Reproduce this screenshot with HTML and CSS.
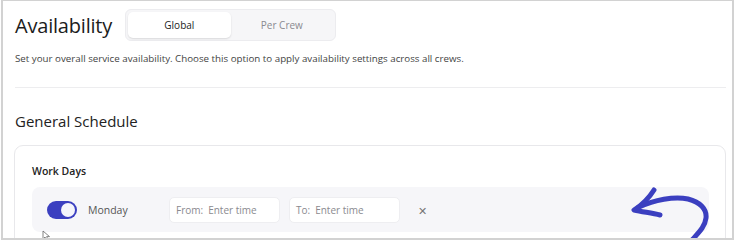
FILE: index.html
```html
<!DOCTYPE html>
<html>
<head>
    <link rel="stylesheet" href="styles.css">
</head>
<body>
    <div class="frame">
        <div class="header">
            <h1 class="title">Availability</h1>
            <div class="segmented">
                <div class="segment active">Global</div>
                <div class="segment">Per Crew</div>
            </div>
        </div>
        <p class="desc">Set your overall service availability. Choose this option to apply availability settings across all crews.</p>
        <div class="divider"></div>
        <h2 class="subtitle">General Schedule</h2>
        <div class="card">
            <div class="card-title">Work Days</div>
            <div class="day-row">
                <div class="toggle on"><span class="knob"></span></div>
                <span class="day-label">Monday</span>
                <div class="time-input"><span class="prefix">From:</span><span class="placeholder">Enter time</span></div>
                <div class="time-input"><span class="prefix">To:</span><span class="placeholder">Enter time</span></div>
                <span class="remove">&#x2715;</span>
            </div>
        </div>

        <svg class="arrow" width="90" height="60" viewBox="0 0 90 60">
            <path d="M9 20 C 24 13, 44 9, 58 12 C 70 15, 77 22, 76 31 C 75 40, 68 46, 62 53" fill="none" stroke="#3b3fc0" stroke-width="5" stroke-linecap="round"/>
            <path d="M24 3 C 19 11, 12 18, 4 23 C 13 25, 22 26, 30 28" fill="none" stroke="#3b3fc0" stroke-width="5" stroke-linecap="round" stroke-linejoin="round"/>
        </svg>

        <svg class="cursor" width="10" height="12" viewBox="0 0 10 12">
            <path d="M1 1 L1 9 L3 7 L5 11 L6.5 10.3 L4.6 6.6 L7.5 6.6 Z" fill="#fff" stroke="#666" stroke-width="0.8" stroke-linejoin="round"/>
        </svg>
    </div>
</body>
</html>
```

FILE: styles.css
```css
body {
    margin: 0;
    background: #fff;
    font-family: "Open Sans", "Noto Sans", sans-serif;
    color: #222;
}

.frame {
    position: relative;
    box-sizing: border-box;
    width: 733px;
    height: 240px;
    margin-left: 1px;
    border: 2px solid #d2d2d2;
    border-top-width: 1px;
    padding: 0 6px 0 12px;
    overflow: hidden;
}

.header {
    display: flex;
    align-items: center;
    gap: 13px;
    padding-top: 9px;
    height: 30px;
}

.title {
    margin: 0;
    font-size: 20px;
    font-weight: 400;
    letter-spacing: -0.2px;
    color: #1c1c1c;
}

.segmented {
    display: flex;
    width: 205px;
    height: 26px;
    padding: 2px;
    background: #f6f6f8;
    border: 1px solid #ececef;
    border-radius: 6px;
}

.segment {
    flex: 1;
    display: flex;
    align-items: center;
    justify-content: center;
    font-size: 10px;
    color: #8a8a90;
    border-radius: 5px;
}

.segment.active {
    background: #fff;
    color: #222;
    box-shadow: 0 1px 2px rgba(0, 0, 0, 0.12);
}

.desc {
    margin: 11px 0 0;
    font-size: 9.75px;
    line-height: 16px;
    color: #444;
}

.divider {
    margin-top: 20px;
    height: 1px;
    background: #ededef;
}

.subtitle {
    margin: 23px 0 0;
    font-size: 15px;
    line-height: 20px;
    font-weight: 400;
    color: #222;
}

.card {
    margin: 14px 0 0 -1px;
    padding: 17px 16px 20px 17px;
    border: 1px solid #e8e8eb;
    border-radius: 9px;
}

.card-title {
    font-size: 10.5px;
    line-height: 16px;
    color: #222;
    font-weight: 600;
}

.day-row {
    display: flex;
    align-items: center;
    margin-top: 8px;
    padding: 10px 15px 9px;
    background: #f6f6f9;
    border-radius: 8px;
}

.toggle {
    position: relative;
    width: 30px;
    height: 18px;
    border-radius: 9px;
    background: #3b3fc0;
}

.knob {
    position: absolute;
    top: 2px;
    right: 2px;
    width: 14px;
    height: 14px;
    border-radius: 50%;
    background: #f4f4fb;
}

.day-label {
    width: 81px;
    margin-left: 11px;
    font-size: 10.5px;
    color: #555;
}

.time-input {
    display: flex;
    align-items: center;
    gap: 5px;
    width: 111px;
    height: 26px;
    padding: 0 6px;
    box-sizing: border-box;
    margin-right: 9px;
    background: #fff;
    border: 1px solid #eeeef1;
    border-radius: 5px;
    font-size: 10px;
    color: #8a8a8f;
}

.remove {
    margin-left: 9px;
    font-size: 11px;
    color: #777;
}

.arrow {
    position: absolute;
    left: 627px;
    top: 186px;
}

.cursor {
    position: absolute;
    left: 39px;
    top: 229px;
}
```
